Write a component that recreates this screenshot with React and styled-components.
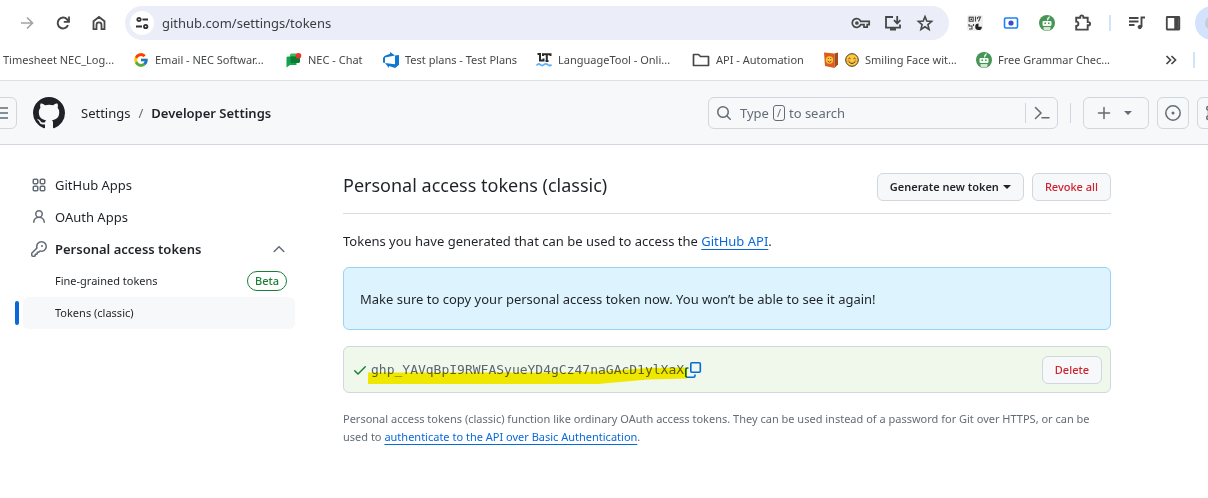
import React from 'react';
import styled, { createGlobalStyle } from 'styled-components';
import { FcGoogle } from 'react-icons/fc';

const GlobalStyle = createGlobalStyle`
  * { box-sizing: border-box; }
  body {
    margin: 0;
    background: #ffffff;
    color: #1f2328;
    font-family: "Noto Sans", "Open Sans", sans-serif;
    font-size: 13px;
    line-height: 20px;
    overflow-x: hidden;
  }
  button, input { font: inherit; color: inherit; }
  svg { display: block; flex: none; }
`;

/* ---------- browser chrome ---------- */

const Chrome = styled.header`
  border-bottom: 1px solid #dfe1dc;
  overflow: hidden;
`;

const Toolbar = styled.div`
  display: flex;
  align-items: center;
  gap: 16px;
  padding: 6px 0 0 17px;
`;

const IconButton = styled.button`
  display: grid;
  place-items: center;
  flex: none;
  width: 20px;
  height: 20px;
  padding: 0;
  border: 0;
  background: none;
  color: ${(p) => (p.$muted ? '#a3a3a3' : '#474747')};
`;

const Omnibox = styled.div`
  display: flex;
  align-items: center;
  flex: 1;
  min-width: 0;
  height: 34px;
  padding: 0 14px 0 5px;
  border-radius: 17px;
  background: #ebeef8;
`;

const SiteInfo = styled.button`
  display: grid;
  place-items: center;
  flex: none;
  width: 24px;
  height: 24px;
  padding: 0;
  border: 0;
  border-radius: 50%;
  background: #ffffff;
  color: #303030;
`;

const Address = styled.input`
  flex: 1;
  min-width: 0;
  margin-left: 8px;
  padding: 0;
  border: 0;
  background: none;
  color: #3a3c40;
`;

const OmniActions = styled.div`
  display: flex;
  gap: 12px;
`;

const Divider = styled.span`
  flex: none;
  width: ${(p) => (p.$soft ? 2 : 1)}px;
  height: ${(p) => (p.$soft ? 16 : 20)}px;
  margin-right: ${(p) => (p.$soft ? 0 : 4)}px;
  background: ${(p) => (p.$soft ? '#d3e3fd' : '#d0d7de')};
`;

const Profile = styled.button`
  flex: none;
  width: 34px;
  height: 34px;
  margin: 0 -21px 0 -4px;
  padding: 0;
  border: 10px solid #d3e3fd;
  border-radius: 50%;
  background: #c9ccd2;
`;

const Bookmarks = styled.nav`
  display: flex;
  align-items: center;
  height: 40px;
  padding: 0 13px 0 3px;
  font-size: 11px;
  line-height: 16px;
`;

const Bookmark = styled.a`
  display: flex;
  align-items: center;
  flex: none;
  gap: 6px;
  width: ${(p) => p.$width}px;
  color: #45474a;
  text-decoration: none;
  white-space: nowrap;
`;

const BookmarkEnd = styled.div`
  display: flex;
  align-items: center;
  gap: 12px;
  margin-left: auto;
`;

/* ---------- site header ---------- */

const SiteHeader = styled.header`
  display: flex;
  align-items: center;
  height: 64px;
  padding-top: 1px;
  border-bottom: 1px solid #d0d7de;
  background: #f6f8fa;
  color: #636c76;
  overflow: hidden;
`;

const HeaderButton = styled.button`
  display: flex;
  align-items: center;
  justify-content: center;
  flex: none;
  gap: 12px;
  width: ${(p) => (p.$wide ? 66 : 32)}px;
  height: 32px;
  padding: 0;
  padding-right: ${(p) => (p.$wide ? 4 : 0)}px;
  border: 1px solid #d0d7de;
  border-radius: 6px;
  background: none;
`;

const MenuButton = styled(HeaderButton)`
  margin-left: -15px;
`;

const HomeLink = styled.a`
  margin: 0 16px;
  color: #1f2328;
`;

const Crumbs = styled.nav`
  display: flex;
  flex: 1;
  gap: 8px;
  white-space: nowrap;
`;

const Crumb = styled.a`
  color: #1f2328;
  text-decoration: none;
  font-weight: ${(p) => (p.$current ? 600 : 400)};
`;

const Search = styled.label`
  display: flex;
  align-items: center;
  flex: 0 1 350px;
  min-width: 0;
  gap: 4px;
  height: 32px;
  padding: 0 7px;
  border: 1px solid #d0d7de;
  border-radius: 6px;
  white-space: nowrap;
`;

const SearchHint = styled.span`
  margin-left: 4px;
`;

const Key = styled.kbd`
  width: 12px;
  height: 16px;
  border: 1px solid #636c76;
  border-radius: 3px;
  font: inherit;
  font-size: 11px;
  line-height: 14px;
  text-align: center;
`;

const SearchInput = styled.input`
  flex: 1;
  width: 0;
  min-width: 0;
  border: 0;
  background: none;
`;

const HeaderActions = styled.div`
  display: flex;
  align-items: center;
  flex: none;
  gap: 8px;
  margin: 0 -21px 0 12px;
`;

const Caret = styled.span`
  flex: none;
  border: 4px solid transparent;
  border-top-color: currentColor;
  border-bottom: 0;
`;

/* ---------- page body ---------- */

const Page = styled.div`
  display: flex;
  gap: 48px;
  padding: 24px 97px 32px 15px;
`;

const SideNav = styled.nav`
  flex: none;
  width: 280px;
  padding-left: 8px;
`;

const NavItem = styled.a`
  position: relative;
  display: flex;
  align-items: center;
  gap: 8px;
  height: 32px;
  padding: 0 8px;
  padding-left: ${(p) => (p.$sub ? 32 : 8)}px;
  border-radius: 6px;
  background: ${(p) => (p.$active ? '#f6f8fa' : 'none')};
  color: #1f2328;
  font-size: ${(p) => (p.$sub ? 11 : 13)}px;
  font-weight: ${(p) => (p.$bold ? 600 : 400)};
  text-decoration: none;

  svg { color: #636c76; }

  &::before {
    content: "";
    display: ${(p) => (p.$active ? 'block' : 'none')};
    position: absolute;
    left: -8px;
    width: 4px;
    height: 24px;
    border-radius: 2px;
    background: #0969da;
  }
`;

const NavLabel = styled.span`
  flex: 1;
`;

const Badge = styled.span`
  padding: 0 7px;
  border: 1px solid #1a7f37;
  border-radius: 10px;
  color: #1a7f37;
  font-size: 11px;
  font-weight: 500;
  line-height: 18px;
`;

const Content = styled.main`
  flex: 1;
  min-width: 0;
`;

const TitleRow = styled.div`
  display: flex;
  align-items: flex-start;
  gap: 8px;
  height: 45px;
  padding-top: 4px;
  border-bottom: 1px solid #d8dee4;
`;

const Title = styled.h1`
  flex: 1;
  margin: 0;
  font-size: 18px;
  font-weight: 400;
  line-height: 24px;
`;

const Button = styled.button`
  display: flex;
  align-items: center;
  justify-content: center;
  flex: none;
  gap: 4px;
  height: 28px;
  padding: 0 12px;
  border: 1px solid #d0d7de;
  border-radius: 6px;
  background: #f6f8fa;
  color: ${(p) => (p.$danger ? '#cf222e' : '#1f2328')};
  font-size: 11px;
  font-weight: ${(p) => (p.$danger ? 500 : 600)};
  white-space: nowrap;
`;

const Intro = styled.p`
  margin: 17px 0 16px;
`;

const TextLink = styled.a`
  color: #0969da;
  text-decoration: underline;
  text-underline-offset: 3px;
`;

const Notice = styled.div`
  padding: 21px 16px 20px;
  border: 1px solid #9bd3f7;
  border-radius: 6px;
  background: #ddf4ff;
`;

const TokenRow = styled.div`
  display: flex;
  align-items: center;
  margin-top: 16px;
  padding: 9px 8px 8px;
  border: 1px solid #d0d7de;
  border-radius: 6px;
  background: #eff8ea;
  color: #1a7f37;
`;

const TokenValue = styled.span`
  position: relative;
  display: flex;
  align-items: center;
  flex: 1;
  margin-left: 3px;
`;

const Token = styled.code`
  color: #5c646d;
  font-family: "DejaVu Sans Mono", monospace;
  font-size: 13px;
`;

const CopyButton = styled.button`
  padding: 0;
  border: 0;
  background: none;
  color: #0969da;
`;

const Marker = styled.svg`
  position: absolute;
  left: -3px;
  top: 7px;
  mix-blend-mode: multiply;
  pointer-events: none;
`;

const Footnote = styled.p`
  margin: 17px 0 0;
  color: #636c76;
  font-size: 11px;
  line-height: 18px;
`;

/* ---------- drawings ---------- */

const Line = ({ size = 20, w = 2, children }) => (
  <svg width={size} height={size} viewBox={`0 0 ${size} ${size}`} fill="none" stroke="currentColor" strokeWidth={w} aria-hidden="true">
    {children}
  </svg>
);

const Oct = ({ size = 16, d }) => (
  <svg width={size} height={size} viewBox="0 0 16 16" fill="currentColor" aria-hidden="true">
    <path d={d} />
  </svg>
);

const MARK =
  'M8 0c4.42 0 8 3.58 8 8a8.013 8.013 0 0 1-5.45 7.59c-.4.08-.55-.17-.55-.38 0-.27.01-1.13.01-2.2 0-.75-.25-1.23-.54-1.48 1.78-.2 3.65-.88 3.65-3.95 0-.88-.31-1.59-.82-2.15.08-.2.36-1.02-.08-2.12 0 0-.67-.22-2.2.82-.64-.18-1.32-.27-2-.27-.68 0-1.36.09-2 .27-1.53-1.03-2.2-.82-2.2-.82-.44 1.1-.16 1.92-.08 2.12-.51.56-.82 1.28-.82 2.15 0 3.06 1.86 3.75 3.64 3.95-.23.2-.44.55-.51 1.07-.46.21-1.61.55-2.33-.66-.15-.24-.6-.83-1.23-.82-.67.01-.27.38.01.53.34.19.73.9.82 1.13.16.45.68 1.31 2.69.94 0 .67.01 1.3.01 1.49 0 .21-.15.45-.55.38A7.995 7.995 0 0 1 0 8c0-4.42 3.58-8 8-8Z';
const PERSON =
  'M10.561 8.073a6.005 6.005 0 0 1 3.432 5.142.75.75 0 1 1-1.498.07 4.5 4.5 0 0 0-8.99 0 .75.75 0 0 1-1.498-.07 6.004 6.004 0 0 1 3.431-5.142 3.999 3.999 0 1 1 5.123 0ZM10.5 5a2.5 2.5 0 1 0-5 0 2.5 2.5 0 0 0 5 0Z';
const KEY =
  'M10.5 0a5.499 5.499 0 1 1-1.288 10.848l-.932.932a.749.749 0 0 1-.53.22H7v.75a.749.749 0 0 1-.22.53l-.5.5a.749.749 0 0 1-.53.22H5v.75a.749.749 0 0 1-.22.53l-.5.5a.749.749 0 0 1-.53.22h-2A1.75 1.75 0 0 1 0 14.25v-2c0-.199.079-.389.22-.53l4.932-4.932A5.5 5.5 0 0 1 10.5 0Zm-4 5.5c-.001.431.069.86.205 1.269a.75.75 0 0 1-.181.768L1.5 12.56v1.69c0 .138.112.25.25.25h1.69l.06-.06v-1.19a.75.75 0 0 1 .75-.75h1.19l.06-.06v-1.19a.75.75 0 0 1 .75-.75h1.19l1.023-1.025a.75.75 0 0 1 .768-.18A4 4 0 1 0 6.5 5.5ZM11 6a1 1 0 1 1 0-2 1 1 0 0 1 0 2Z';
const CHECK =
  'M13.78 4.22a.75.75 0 0 1 0 1.06l-7.25 7.25a.75.75 0 0 1-1.06 0L2.22 9.28a.751.751 0 0 1 .018-1.042.751.751 0 0 1 1.042-.018L6 10.94l6.72-6.72a.75.75 0 0 1 1.06 0Z';
const SEARCH =
  'M10.68 11.74a6 6 0 0 1-7.922-8.982 6 6 0 0 1 8.982 7.922l3.04 3.04a.749.749 0 0 1-.326 1.275.749.749 0 0 1-.734-.215ZM11.5 7a4.499 4.499 0 1 0-8.997 0A4.499 4.499 0 0 0 11.5 7Z';

const Forward = () => <Line w={1.7}><path d="M4 10h11M10 4.5l5.5 5.5-5.5 5.5" /></Line>;
const Reload = () => (
  <Line>
    <path d="M15 12.2A5.4 5.4 0 1 1 14 6.3L15.5 8" />
    <path d="M16 3.6v5.2h-5.2" strokeWidth="1.8" />
  </Line>
);
const HomeIcon = () => (
  <Line w={1.8}>
    <path d="M4.5 16.2V8.3L10 4l5.5 4.3v7.9h-3v-4.4a2.5 2.5 0 0 0-5 0v4.4z" />
  </Line>
);
const Tune = () => (
  <Line size={16} w={1.8}>
    <circle cx="5" cy="4.5" r="1.7" />
    <path d="M8.5 4.5H14M2 11.5h6" />
    <circle cx="11.7" cy="11.5" r="1.7" />
  </Line>
);
const VpnKey = () => (
  <Line w={1.7}>
    <path d="M9.7 8.3A4.4 4.4 0 1 0 9.7 11.7H13v2.4h3.2v-2.4h2V8.3z" />
    <circle cx="5.9" cy="10" r="1" fill="currentColor" />
  </Line>
);
const Install = () => (
  <Line w={1.8}>
    <path d="M10 4H3v10.6h14v-3" />
    <path d="M14.2 3v7M11 7.2l3.2 3.2 3.2-3.2" />
    <path d="M7 16.3h6" strokeWidth="2.4" />
  </Line>
);
const Star = () => (
  <Line w={1.6}>
    <path d="M10 3.6l1.8 4.5 4.8.4-3.7 3.1 1.2 4.8L10 13.8l-4.1 2.6 1.2-4.8-3.7-3.1 4.8-.4z" />
  </Line>
);
const QrCode = () => (
  <svg width="16" height="16" viewBox="0 0 16 16" aria-hidden="true">
    <rect width="16" height="16" rx="2" fill="#f1f1f1" />
    <g fill="none" stroke="#444" strokeWidth="1.1">
      <rect x="2.2" y="2.2" width="4" height="4" />
      <path d="M8.500 1.500v5M10.500 2v2M11.500 6.500 13.500 2H11" />
      <path d="M2 9v2h3v3H2M6.500 9v2" />
    </g>
    <path d="M11.5 8.5v3.2h3.3a3.3 3.3 0 1 1-3.3-3.2z" fill="#222" />
    <path d="M3.5 3.5h1.500v1.500H3.500z" fill="#333" />
  </svg>
);
const Camera = () => (
  <svg width="16" height="16" viewBox="0 0 16 16" aria-hidden="true">
    <rect x="1.5" y="3" width="13" height="10" rx="1.5" fill="#fff" stroke="#1a82f7" strokeWidth="1.6" />
    <circle cx="8" cy="8" r="2.6" fill="#3d4bd0" />
  </svg>
);
const Robot = () => (
  <svg width="16" height="16" viewBox="0 0 16 16" aria-hidden="true">
    <circle cx="8" cy="8" r="8" fill="#469556" />
    <path d="M8 6C7.500 3 9 1.500 11 1.200 10.800 3 10 4 8 6z" fill="#dcefdc" />
    <rect x="3.5" y="6" width="9" height="5" rx="1" fill="#f4faf4" />
    <path d="M4.500 12h7v1.500a2 2 0 0 1-2 2h-3a2 2 0 0 1-2-2z" fill="#cfe6d0" />
    <path d="M5.500 7.500h1.500v1.500H5.500zM9 7.500h1.500v1.500H9z" fill="#469556" />
  </svg>
);
const Puzzle = () => (
  <Line w={1.9}>
    <path d="M3.200 4.800H7.200V4a1.600 1.600 0 0 1 3.200 0v.8h4.300v4.300h.8a1.600 1.600 0 0 1 0 3.200h-.8v4.300H3.200V13a2.200 2.200 0 0 0 0-4.400z" />
  </Line>
);
const Queue = () => (
  <Line w={1.9}>
    <path d="M2 5h9.500M2 8.500h9.500M2 12h5.500M14.500 14V4.500H18" />
    <circle cx="12.800" cy="14" r="1.700" fill="currentColor" strokeWidth="1" />
  </Line>
);
const SidePanel = () => (
  <Line w={1.8}>
    <rect x="3.8" y="4" width="12.5" height="12.500" rx="0.5" />
    <path d="M13.5 4v12.5" strokeWidth="4.5" />
  </Line>
);
const ChatIcon = () => (
  <svg width="16" height="16" viewBox="0 0 16 16" aria-hidden="true">
    <path d="M5 1.500h6v9H4v-8z" fill="#3cba54" />
    <path d="M1.500 4.500h9V13H4l-3.500 2.500V5.500z" fill="#14a24a" />
    <path d="M4.500 4.500h9.500v5.500l-1 1H5.500l-1-1z" fill="#087c34" />
    <circle cx="12.500" cy="3.800" r="2.800" fill="#e6352b" />
  </svg>
);
const Azure = () => (
  <svg width="16" height="16" viewBox="0 0 24 24" aria-hidden="true">
    <path d="M0 8.877L2.247 5.91l8.405-3.416V.022l7.37 5.393L2.966 8.338v8.225L0 15.707zm24-4.45v14.651l-5.753 4.9-9.303-3.057v3.056l-5.978-7.416 15.057 1.798V5.415z" fill="#0c78d4" />
  </svg>
);
const LangTool = () => (
  <svg width="16" height="16" viewBox="0 0 16 16" fill="none" aria-hidden="true">
    <path d="M1.500 2H4v6.500h3.500V6.500M7 4V2.200h7.500V4M10.800 2v7M9.500 9h3" stroke="#2b2b2b" strokeWidth="2" />
    <path d="M.5 13.500q2-2.500 3.800-.8t3.700 0 3.700 0 3.800 0" stroke="#59b2fa" strokeWidth="1.800" />
  </svg>
);
const Folder = () => (
  <svg width="18" height="16" viewBox="0 0 18 16" fill="none" stroke="#474747" strokeWidth="1.7" aria-hidden="true">
    <path d="M1.500 2.500h5l2 2h8v9h-15z" strokeLinejoin="round" />
  </svg>
);
const BookFace = () => (
  <svg width="16" height="16" viewBox="0 0 16 16" aria-hidden="true">
    <path d="M1 .5 11.500 1.500V16L2 14z" fill="#df5a1d" />
    <path d="M11.500 1.500 15 .5v12l-3.500 3.500z" fill="#a84a1c" />
    <circle cx="6.500" cy="8" r="3.700" fill="#f7c83b" />
    <path d="M4.500 9q2 2.500 4 0M5.300 6v1M7.700 6v1" fill="none" stroke="#91400e" />
  </svg>
);
const Smile = () => (
  <svg width="14" height="14" viewBox="0 0 14 14" fill="none" stroke="#41351d" aria-hidden="true">
    <circle cx="7" cy="7" r="6.3" fill="#ffca3c" />
    <circle cx="3.500" cy="8" r="1.2" fill="#f28b50" stroke="none" />
    <circle cx="10.500" cy="8" r="1.2" fill="#f28b50" stroke="none" />
    <path d="M3.500 5.800q1-1.400 2 0M8.500 5.800q1-1.400 2 0M4 8.800q3 3.200 6 0" />
  </svg>
);
const More = () => <Line size={12} w={1.7}><path d="M1.500 2 5.500 6l-4 4M6.500 2l4 4-4 4" /></Line>;
const MenuIcon = () => <Line size={16} w={1.5}><path d="M1 3h14M1 8h14M1 13h14" /></Line>;
const Command = () => (
  <Line size={16} w={1.5}><path d="M1.500 2.500 7 8l-5.500 5.500M8 12.700h7" strokeLinecap="round" /></Line>
);
const Plus = () => <Line size={16} w={1.5}><path d="M8 2.500v11M2.500 8h11" strokeLinecap="round" /></Line>;
const Issue = () => (
  <Line size={16} w={1.5}>
    <circle cx="8" cy="8" r="7.2" />
    <circle cx="8" cy="8" r="1.5" fill="currentColor" stroke="none" />
  </Line>
);
const PullRequest = () => (
  <Line size={16} w={1.5}><circle cx="3.500" cy="3.200" r="1.800" /><circle cx="3.500" cy="12.800" r="1.800" /><path d="M3.500 5v6M12.500 11V5.500a2 2 0 0 0-2-2H8" /><circle cx="12.500" cy="12.800" r="1.800" /></Line>
);
const Apps = () => (
  <Line size={16} w={1.5}>
    <rect x="2.250" y="2.250" width="4.500" height="4.500" rx="1" />
    <rect x="9.250" y="2.250" width="4.500" height="4.500" rx="1" />
    <rect x="2.250" y="9.250" width="4.500" height="4.500" rx="1" />
    <rect x="9.250" y="9.250" width="4.500" height="4.500" rx="1" />
  </Line>
);
const ChevronUp = () => <Line size={16} w={1.5}><path d="M3.200 10.500 8 5.700l4.800 4.800" strokeLinecap="round" /></Line>;
const Copy = () => (
  <Line size={18} w={1.6}>
    <rect x="6.800" y="1.800" width="9.500" height="9.500" rx="1" />
    <path d="M4.500 7H3.300a1.500 1.500 0 0 0-1.500 1.500v6.200a1.500 1.500 0 0 0 1.500 1.500h6.200a1.500 1.500 0 0 0 1.500-1.500v-1.200" />
  </Line>
);

/* ---------- data ---------- */

const bookmarks = [
  { label: 'Timesheet NEC_Log...', width: 130 },
  { label: 'Email - NEC Softwar...', width: 153, icon: <FcGoogle size={16} /> },
  { label: 'NEC - Chat', width: 97, icon: <ChatIcon /> },
  { label: 'Test plans - Test Plans', width: 153, icon: <Azure /> },
  { label: 'LanguageTool - Onli...', width: 156, icon: <LangTool /> },
  { label: 'API - Automation', width: 131, icon: <Folder /> },
  { label: 'Smiling Face wit...', width: 153, icon: <><BookFace /><Smile /></> },
  { label: 'Free Grammar Chec...', width: 140, icon: <Robot /> },
];

export default function App() {
  return (
    <>
      <GlobalStyle />
      <Chrome>
        <Toolbar>
          <IconButton $muted aria-label="Forward"><Forward /></IconButton>
          <IconButton aria-label="Reload"><Reload /></IconButton>
          <IconButton aria-label="Home"><HomeIcon /></IconButton>
          <Omnibox>
            <SiteInfo aria-label="Site information"><Tune /></SiteInfo>
            <Address aria-label="Address" defaultValue="github.com/settings/tokens" />
            <OmniActions>
              <IconButton aria-label="Passwords"><VpnKey /></IconButton>
              <IconButton aria-label="Install"><Install /></IconButton>
              <IconButton aria-label="Bookmark"><Star /></IconButton>
            </OmniActions>
          </Omnibox>
          <IconButton aria-label="QR code"><QrCode /></IconButton>
          <IconButton aria-label="Screen capture"><Camera /></IconButton>
          <IconButton aria-label="Grammar check"><Robot /></IconButton>
          <IconButton aria-label="Extensions"><Puzzle /></IconButton>
          <Divider $soft />
          <IconButton aria-label="Media"><Queue /></IconButton>
          <IconButton aria-label="Side panel"><SidePanel /></IconButton>
          <Profile aria-label="Profile" />
        </Toolbar>
        <Bookmarks aria-label="Bookmarks">
          {bookmarks.map((b) => (
            <Bookmark key={b.label} href="#" $width={b.width}>
              {b.icon}
              {b.label}
            </Bookmark>
          ))}
          <BookmarkEnd>
            <IconButton aria-label="More bookmarks"><More /></IconButton>
            <Divider $soft />
          </BookmarkEnd>
        </Bookmarks>
      </Chrome>

      <SiteHeader>
        <MenuButton aria-label="Menu"><MenuIcon /></MenuButton>
        <HomeLink href="#" aria-label="GitHub"><Oct size={32} d={MARK} /></HomeLink>
        <Crumbs aria-label="Breadcrumb">
          <Crumb href="#">Settings</Crumb>
          <span>/</span>
          <Crumb href="#" $current>Developer Settings</Crumb>
        </Crumbs>
        <Search>
          <Oct d={SEARCH} />
          <SearchHint>Type</SearchHint>
          <Key>/</Key>
          to search
          <SearchInput aria-label="Search" />
          <Divider />
          <Command />
        </Search>
        <HeaderActions>
          <Divider />
          <HeaderButton $wide aria-label="Create new"><Plus /><Caret /></HeaderButton>
          <HeaderButton aria-label="Issues"><Issue /></HeaderButton>
          <HeaderButton aria-label="Pull requests"><PullRequest /></HeaderButton>
        </HeaderActions>
      </SiteHeader>

      <Page>
        <SideNav aria-label="Developer settings">
          <NavItem href="#"><Apps /><NavLabel>GitHub Apps</NavLabel></NavItem>
          <NavItem href="#"><Oct d={PERSON} /><NavLabel>OAuth Apps</NavLabel></NavItem>
          <NavItem href="#" $bold>
            <Oct d={KEY} /><NavLabel>Personal access tokens</NavLabel><ChevronUp />
          </NavItem>
          <NavItem href="#" $sub><NavLabel>Fine-grained tokens</NavLabel><Badge>Beta</Badge></NavItem>
          <NavItem href="#" $sub $active><NavLabel>Tokens (classic)</NavLabel></NavItem>
        </SideNav>

        <Content>
          <TitleRow>
            <Title>Personal access tokens (classic)</Title>
            <Button>Generate new token<Caret /></Button>
            <Button $danger>Revoke all</Button>
          </TitleRow>
          <Intro>
            Tokens you have generated that can be used to access the <TextLink href="#">GitHub API</TextLink>.
          </Intro>
          <Notice>Make sure to copy your personal access token now. You won’t be able to see it again!</Notice>
          <TokenRow>
            <Oct d={CHECK} />
            <TokenValue>
              <Token>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</Token>
              <CopyButton aria-label="Copy token"><Copy /></CopyButton>
              <Marker width="320" height="20" viewBox="0 0 320 20" aria-hidden="true">
                <path d="M0 5.500h200l40-1.500 40-3 39-.5v11l-39 1-50 4.500H0z" fill="#ffee00" />
              </Marker>
            </TokenValue>
            <Button $danger>Delete</Button>
          </TokenRow>
          <Footnote>
            Personal access tokens (classic) function like ordinary OAuth access tokens. They can be used instead of a password for Git over HTTPS, or can be used to <TextLink href="#">authenticate to the API over Basic Authentication</TextLink>.
          </Footnote>
        </Content>
      </Page>
    </>
  );
}
